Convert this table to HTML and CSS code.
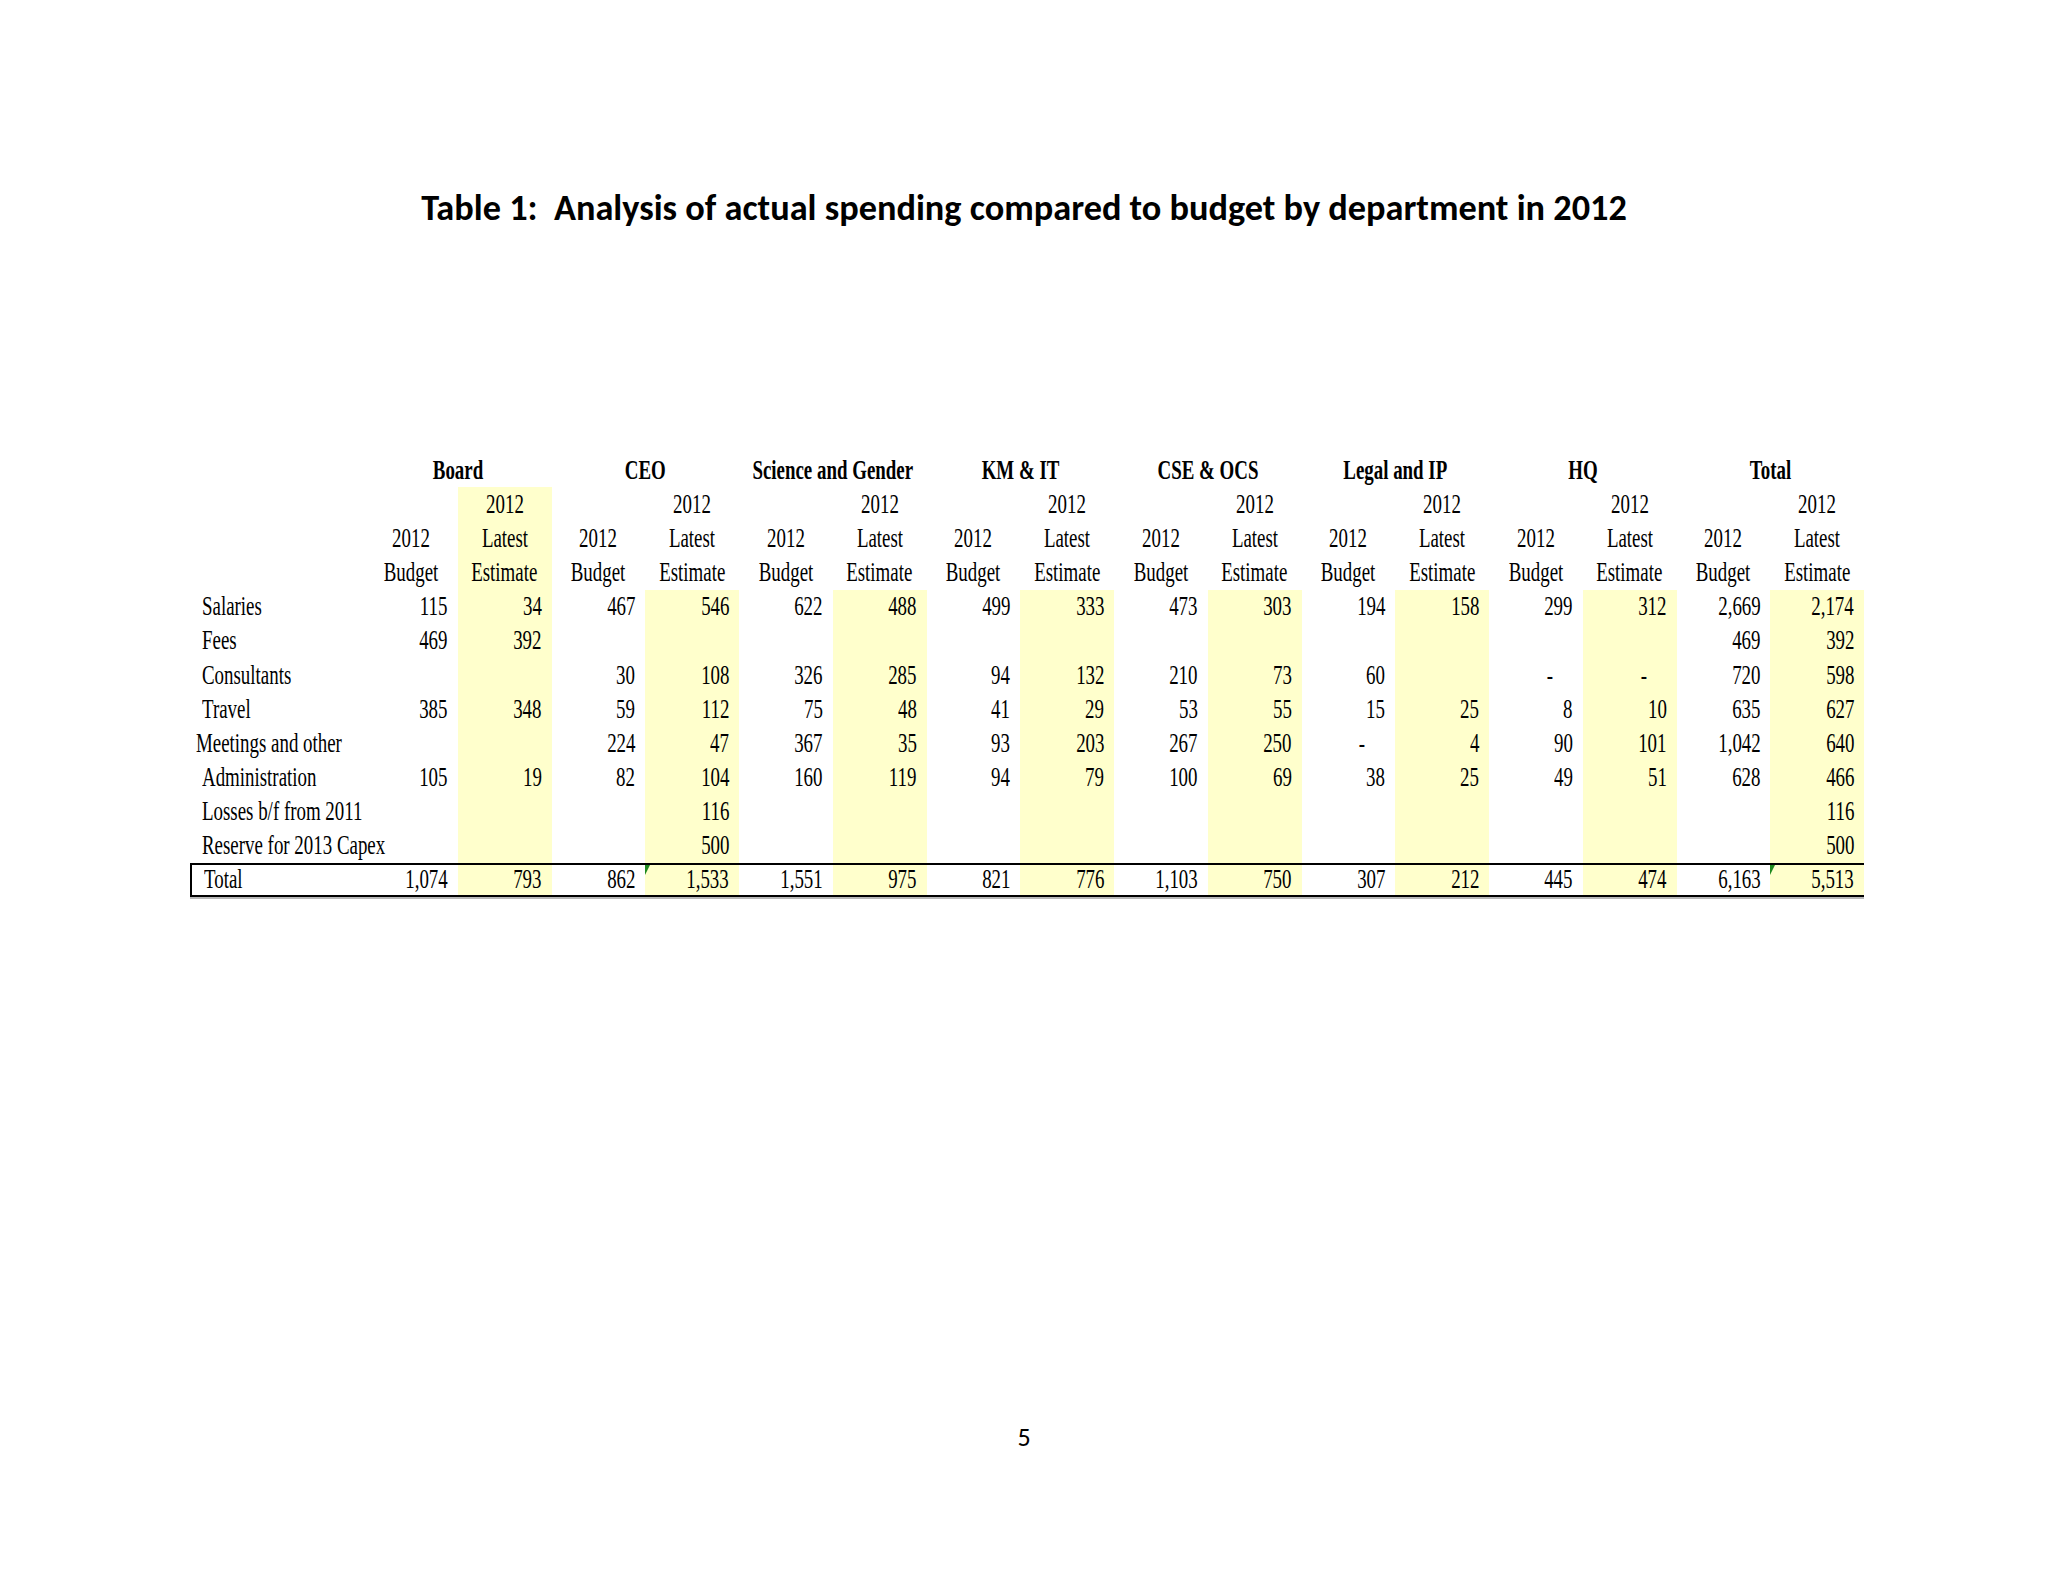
FILE: index.html
```html
<!DOCTYPE html>
<html lang="en">
<head>
<meta charset="utf-8">
<title>Table 1</title>
<link rel="stylesheet" href="styles.css">
</head>
<body>
<div class="page">
  <h1 class="title">Table 1:&nbsp; Analysis of actual spending compared to budget by department in 2012</h1>
  <table class="sheet">
    <colgroup>
      <col class="c-lab">
      <col class="c-num"><col class="c-num"><col class="c-num"><col class="c-num">
      <col class="c-num"><col class="c-num"><col class="c-num"><col class="c-num">
      <col class="c-num"><col class="c-num"><col class="c-num"><col class="c-num">
      <col class="c-num"><col class="c-num"><col class="c-num"><col class="c-num">
    </colgroup>
    <thead>
      <tr class="dept">
        <th></th>
        <th colspan="2"><span class="t">Board</span></th>
        <th colspan="2"><span class="t">CEO</span></th>
        <th colspan="2"><span class="t">Science and Gender</span></th>
        <th colspan="2"><span class="t">KM &amp; IT</span></th>
        <th colspan="2"><span class="t">CSE &amp; OCS</span></th>
        <th colspan="2"><span class="t">Legal and IP</span></th>
        <th colspan="2"><span class="t">HQ</span></th>
        <th colspan="2"><span class="t">Total</span></th>
      </tr>
      <tr class="hd">
        <th></th>
        <th></th><th class="y"><span class="t">2012</span></th>
        <th></th><th><span class="t">2012</span></th>
        <th></th><th><span class="t">2012</span></th>
        <th></th><th><span class="t">2012</span></th>
        <th></th><th><span class="t">2012</span></th>
        <th></th><th><span class="t">2012</span></th>
        <th></th><th><span class="t">2012</span></th>
        <th></th><th><span class="t">2012</span></th>
      </tr>
      <tr class="hd">
        <th></th>
        <th><span class="t">2012</span></th><th class="y"><span class="t">Latest</span></th>
        <th><span class="t">2012</span></th><th><span class="t">Latest</span></th>
        <th><span class="t">2012</span></th><th><span class="t">Latest</span></th>
        <th><span class="t">2012</span></th><th><span class="t">Latest</span></th>
        <th><span class="t">2012</span></th><th><span class="t">Latest</span></th>
        <th><span class="t">2012</span></th><th><span class="t">Latest</span></th>
        <th><span class="t">2012</span></th><th><span class="t">Latest</span></th>
        <th><span class="t">2012</span></th><th><span class="t">Latest</span></th>
      </tr>
      <tr class="hd">
        <th></th>
        <th><span class="t">Budget</span></th><th class="y"><span class="t">Estimate</span></th>
        <th><span class="t">Budget</span></th><th><span class="t">Estimate</span></th>
        <th><span class="t">Budget</span></th><th><span class="t">Estimate</span></th>
        <th><span class="t">Budget</span></th><th><span class="t">Estimate</span></th>
        <th><span class="t">Budget</span></th><th><span class="t">Estimate</span></th>
        <th><span class="t">Budget</span></th><th><span class="t">Estimate</span></th>
        <th><span class="t">Budget</span></th><th><span class="t">Estimate</span></th>
        <th><span class="t">Budget</span></th><th><span class="t">Estimate</span></th>
      </tr>
    </thead>
    <tbody>
      <tr>
        <td class="lab"><span class="t">Salaries</span></td>
        <td><span class="t">115</span></td><td class="y"><span class="t">34</span></td>
        <td><span class="t">467</span></td><td class="y"><span class="t">546</span></td>
        <td><span class="t">622</span></td><td class="y"><span class="t">488</span></td>
        <td><span class="t">499</span></td><td class="y"><span class="t">333</span></td>
        <td><span class="t">473</span></td><td class="y"><span class="t">303</span></td>
        <td><span class="t">194</span></td><td class="y"><span class="t">158</span></td>
        <td><span class="t">299</span></td><td class="y"><span class="t">312</span></td>
        <td><span class="t">2,669</span></td><td class="y"><span class="t">2,174</span></td>
      </tr>
      <tr>
        <td class="lab"><span class="t">Fees</span></td>
        <td><span class="t">469</span></td><td class="y"><span class="t">392</span></td>
        <td></td><td class="y"></td>
        <td></td><td class="y"></td>
        <td></td><td class="y"></td>
        <td></td><td class="y"></td>
        <td></td><td class="y"></td>
        <td></td><td class="y"></td>
        <td><span class="t">469</span></td><td class="y"><span class="t">392</span></td>
      </tr>
      <tr>
        <td class="lab"><span class="t">Consultants</span></td>
        <td></td><td class="y"></td>
        <td><span class="t">30</span></td><td class="y"><span class="t">108</span></td>
        <td><span class="t">326</span></td><td class="y"><span class="t">285</span></td>
        <td><span class="t">94</span></td><td class="y"><span class="t">132</span></td>
        <td><span class="t">210</span></td><td class="y"><span class="t">73</span></td>
        <td><span class="t">60</span></td><td class="y"></td>
        <td class="d"><span class="t">-</span></td><td class="y d"><span class="t">-</span></td>
        <td><span class="t">720</span></td><td class="y"><span class="t">598</span></td>
      </tr>
      <tr>
        <td class="lab"><span class="t">Travel</span></td>
        <td><span class="t">385</span></td><td class="y"><span class="t">348</span></td>
        <td><span class="t">59</span></td><td class="y"><span class="t">112</span></td>
        <td><span class="t">75</span></td><td class="y"><span class="t">48</span></td>
        <td><span class="t">41</span></td><td class="y"><span class="t">29</span></td>
        <td><span class="t">53</span></td><td class="y"><span class="t">55</span></td>
        <td><span class="t">15</span></td><td class="y"><span class="t">25</span></td>
        <td><span class="t">8</span></td><td class="y"><span class="t">10</span></td>
        <td><span class="t">635</span></td><td class="y"><span class="t">627</span></td>
      </tr>
      <tr>
        <td class="lab lab-wide"><span class="t">Meetings and other</span></td>
        <td></td><td class="y"></td>
        <td><span class="t">224</span></td><td class="y"><span class="t">47</span></td>
        <td><span class="t">367</span></td><td class="y"><span class="t">35</span></td>
        <td><span class="t">93</span></td><td class="y"><span class="t">203</span></td>
        <td><span class="t">267</span></td><td class="y"><span class="t">250</span></td>
        <td class="d"><span class="t">-</span></td><td class="y"><span class="t">4</span></td>
        <td><span class="t">90</span></td><td class="y"><span class="t">101</span></td>
        <td><span class="t">1,042</span></td><td class="y"><span class="t">640</span></td>
      </tr>
      <tr>
        <td class="lab"><span class="t">Administration</span></td>
        <td><span class="t">105</span></td><td class="y"><span class="t">19</span></td>
        <td><span class="t">82</span></td><td class="y"><span class="t">104</span></td>
        <td><span class="t">160</span></td><td class="y"><span class="t">119</span></td>
        <td><span class="t">94</span></td><td class="y"><span class="t">79</span></td>
        <td><span class="t">100</span></td><td class="y"><span class="t">69</span></td>
        <td><span class="t">38</span></td><td class="y"><span class="t">25</span></td>
        <td><span class="t">49</span></td><td class="y"><span class="t">51</span></td>
        <td><span class="t">628</span></td><td class="y"><span class="t">466</span></td>
      </tr>
      <tr>
        <td class="lab"><span class="t">Losses b/f from 2011</span></td>
        <td></td><td class="y"></td>
        <td></td><td class="y"><span class="t">116</span></td>
        <td></td><td class="y"></td>
        <td></td><td class="y"></td>
        <td></td><td class="y"></td>
        <td></td><td class="y"></td>
        <td></td><td class="y"></td>
        <td></td><td class="y"><span class="t">116</span></td>
      </tr>
      <tr>
        <td class="lab"><span class="t">Reserve for 2013 Capex</span></td>
        <td></td><td class="y"></td>
        <td></td><td class="y"><span class="t">500</span></td>
        <td></td><td class="y"></td>
        <td></td><td class="y"></td>
        <td></td><td class="y"></td>
        <td></td><td class="y"></td>
        <td></td><td class="y"></td>
        <td></td><td class="y"><span class="t">500</span></td>
      </tr>
      <tr class="total">
        <td class="lab"><span class="t">Total</span></td>
        <td><span class="t">1,074</span></td><td class="y"><span class="t">793</span></td>
        <td><span class="t">862</span></td><td class="y mark"><span class="t">1,533</span></td>
        <td><span class="t">1,551</span></td><td class="y"><span class="t">975</span></td>
        <td><span class="t">821</span></td><td class="y"><span class="t">776</span></td>
        <td><span class="t">1,103</span></td><td class="y"><span class="t">750</span></td>
        <td><span class="t">307</span></td><td class="y"><span class="t">212</span></td>
        <td><span class="t">445</span></td><td class="y"><span class="t">474</span></td>
        <td><span class="t">6,163</span></td><td class="y mark"><span class="t">5,513</span></td>
      </tr>
    </tbody>
  </table>
  <div class="pnum">5</div>
</div>
</body>
</html>
```

FILE: styles.css
```css
html, body {
  margin: 0;
  padding: 0;
  background: #ffffff;
}

.page {
  width: 2048px;
  height: 1582px;
  box-sizing: border-box;
  padding-top: 186px;
  display: flex;
  flex-direction: column;
  color: #000;
}

.title {
  margin: 0;
  font-family: "Carlito", "Lato", "Liberation Sans", sans-serif;
  font-weight: 700;
  font-size: 36.3px;
  line-height: 44px;
  text-align: center;
}

.sheet {
  margin: 223px 0 0 190px;
  width: 1674px;
  table-layout: fixed;
  border-collapse: separate;
  border-spacing: 0;
  font-family: "Liberation Serif", "Times New Roman", serif;
  font-size: 27px;
  line-height: 1;
}

.c-lab { width: 174px; }
.c-num { width: 93.75px; }

.sheet tr { height: 34.17px; }

.sheet th,
.sheet td {
  padding: 0 10px;
  vertical-align: middle;
  white-space: nowrap;
  text-align: right;
  font-weight: 400;
  overflow: visible;
}

.sheet .t {
  display: inline-block;
  transform: scaleX(0.7);
  transform-origin: 100% 50%;
}

.sheet thead th {
  text-align: center;
  padding: 0;
}
.sheet thead th .t {
  transform-origin: 50% 50%;
  margin: 0 -60px;
}

.sheet .dept th { font-weight: 700; }

.sheet .lab {
  text-align: left;
  padding-left: 12px;
  padding-right: 0;
}
.sheet .lab .t { transform-origin: 0 50%; }
.sheet .lab-wide { padding-left: 6px; }

.sheet .d { padding-right: 30px; }

.sheet .y { background: #ffffcc; }

.total td {
  border-top: 2px solid #000;
  border-bottom: 2px solid #000;
  box-shadow: 0 2px 0 #b8b8b8;
}
.total td.lab { border-left: 2px solid #000; }

.mark { position: relative; }
.mark::before {
  content: "";
  position: absolute;
  left: 0;
  top: 0;
  border-top: 10px solid #1f8a1f;
  border-right: 5px solid transparent;
}

.pnum {
  margin-top: 524px;
  text-align: center;
  font-family: "Carlito", "Lato", "Liberation Sans", sans-serif;
  font-size: 26px;
  line-height: 32px;
}
```
